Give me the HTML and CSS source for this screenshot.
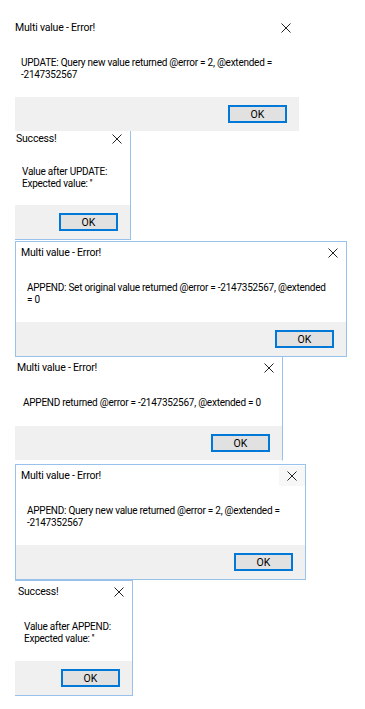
FILE: index.html
```html
<!doctype html>
<html lang="en">
<head>
  <meta charset="UTF-8">
  <meta name="viewport" content="width=device-width, initial-scale=1">
  <title>Message boxes</title>
  <link rel="stylesheet" href="styles.css">
</head>
<body>
<div class="stack">

  <div class="dialog d1">
    <div class="titlebar">
      <span class="title">Multi value - Error!</span>
      <span class="close"><svg viewBox="0 0 10 10"><path d="M0.5 0.5L9.5 9.5M9.5 0.5L0.5 9.5"/></svg></span>
    </div>
    <div class="message">UPDATE: Query new value returned @error = 2, @extended =<br>-2147352567</div>
    <div class="footer"><button class="btn">OK</button></div>
  </div>

  <div class="dialog d2">
    <div class="titlebar">
      <span class="title">Success!</span>
      <span class="close"><svg viewBox="0 0 10 10"><path d="M0.5 0.5L9.5 9.5M9.5 0.5L0.5 9.5"/></svg></span>
    </div>
    <div class="message">Value after UPDATE:<br>Expected value: ''</div>
    <div class="footer"><button class="btn">OK</button></div>
  </div>

  <div class="dialog d3">
    <div class="titlebar">
      <span class="title">Multi value - Error!</span>
      <span class="close"><svg viewBox="0 0 10 10"><path d="M0.5 0.5L9.5 9.5M9.5 0.5L0.5 9.5"/></svg></span>
    </div>
    <div class="message">APPEND: Set original value returned @error = -2147352567, @extended<br>= 0</div>
    <div class="footer"><button class="btn">OK</button></div>
  </div>

  <div class="dialog d4">
    <div class="titlebar">
      <span class="title">Multi value - Error!</span>
      <span class="close"><svg viewBox="0 0 10 10"><path d="M0.5 0.5L9.5 9.5M9.5 0.5L0.5 9.5"/></svg></span>
    </div>
    <div class="message">APPEND returned @error = -2147352567, @extended = 0</div>
    <div class="footer"><button class="btn">OK</button></div>
  </div>

  <div class="dialog d5">
    <div class="titlebar">
      <span class="title">Multi value - Error!</span>
      <span class="close hover"><svg viewBox="0 0 10 10"><path d="M0.5 0.5L9.5 9.5M9.5 0.5L0.5 9.5"/></svg></span>
    </div>
    <div class="message">APPEND: Query new value returned @error = 2, @extended =<br>-2147352567</div>
    <div class="footer"><button class="btn">OK</button></div>
  </div>

  <div class="dialog d6">
    <div class="titlebar">
      <span class="title">Success!</span>
      <span class="close"><svg viewBox="0 0 10 10"><path d="M0.5 0.5L9.5 9.5M9.5 0.5L0.5 9.5"/></svg></span>
    </div>
    <div class="message">Value after APPEND:<br>Expected value: ''</div>
    <div class="footer"><button class="btn">OK</button></div>
  </div>

</div>
</body>
</html>
```

FILE: styles.css
```css
body {
  margin: 0;
  background: #ffffff;
  font-family: Roboto, "Liberation Sans", sans-serif;
  font-size: 10px;
  color: #000;
}
.stack {
  display: flex;
  flex-direction: column;
  align-items: flex-start;
  padding: 17px 0 0 15px;
}
.dialog {
  --cut: 0px;
  display: flex;
  flex-direction: column;
  background: white;
  border: 1px solid transparent;
  border-left-width: 0;
  box-sizing: border-box;
}
.titlebar {
  display: flex;
  align-items: center;
  justify-content: space-between;
  height: 22px;
  padding-left: calc(5px - var(--cut));
}
.title {
  font-size: 10.5px;
  line-height: 12px;
  letter-spacing: -0.2px;
}
.close {
  display: flex;
  align-items: center;
  justify-content: center;
  width: 26px;
  height: 20px;
}
.close.hover {
  background: #f7f7f7;
}
.close svg {
  width: 10px;
  height: 10px;
  fill: none;
  stroke: #222;
  stroke-width: 1;
}
.message {
  padding: 18px 0 16px calc(11px - var(--cut));
  line-height: 12px;
  letter-spacing: -0.25px;
  white-space: nowrap;
}
.footer {
  display: flex;
  justify-content: flex-end;
  height: 34px;
  padding: 8px 12px 0 0;
  box-sizing: border-box;
  background: #f0f0f0;
}
.btn {
  width: 59px;
  height: 18px;
  padding: 0;
  border: 2px solid #0078d7;
  background: #e1e1e1;
  font-family: inherit;
  font-size: 10.5px;
  color: #000;
}

.d1 { --cut: 5px; width: 284px; border-width: 0; }
.d2 { --cut: 4px; width: 116px; border-right-color: #99c2ea; border-bottom-color: #99c2ea; border-top-width: 0; }
.d2 .titlebar { height: 16px; }
.d2 .message { padding-top: 19px; padding-bottom: 15px; }
.d3 { --cut: 0px; width: 332px; border-color: #99c2ea; border-left-width: 1px; margin-top: 1px; }
.d4 { --cut: 3px; width: 268px; border-right-color: #99c2ea; border-top-width: 0; }
.d4 .message { padding-bottom: 17px; }
.d5 { --cut: 0px; width: 291px; border-color: #99c2ea; border-left-width: 1px; margin-top: 3px; }
.d6 { --cut: 2px; width: 118px; border-color: #99c2ea; border-left-width: 0; margin-top: 0; }
```
